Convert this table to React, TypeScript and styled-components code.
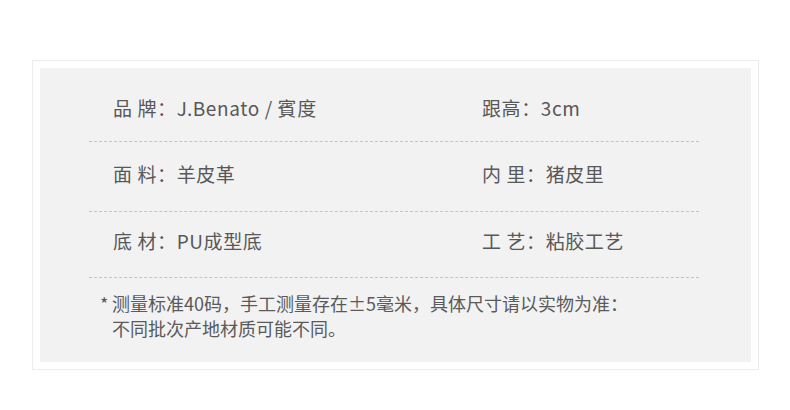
import React from "react";
import styled, { createGlobalStyle } from "styled-components";

const Global = createGlobalStyle`
  html, body { margin: 0; padding: 0; background: #fff; }
  body { font-family: "Noto Sans CJK SC", "Noto Sans", sans-serif; }
`;

const Frame = styled.div`
  margin: 60px 0 0 32px;
  width: 727px;
  height: 310px;
  box-sizing: border-box;
  border: 1px solid #ececec;
  padding: 7px;
`;

const Panel = styled.div`
  background: #f2f2f2;
  height: 100%;
  box-sizing: border-box;
  padding: 0 52px 0 49px;
`;

const Row = styled.div<{ $h: number; $pt: number }>`
  display: grid;
  grid-template-columns: 369px 1fr;
  height: ${(p) => p.$h}px;
  box-sizing: border-box;
  padding: ${(p) => p.$pt}px 0 0 24px;
  align-items: start;
  border-bottom: 1px dashed #c4c4c4;
`;

const Cell = styled.div`
  font-size: 19px;
  line-height: 28px;
  color: #585858;
  white-space: nowrap;
  letter-spacing: 0.6px;
`;

const Note = styled.div`
  padding: 13px 0 0 11px;
  font-size: 18px;
  line-height: 24.5px;
  color: #5a5a5a;
  display: flex;
  gap: 3px;
`;

const Star = styled.span`
  width: 9px;
`;

const rows = [
  { h: 74, pt: 26, a: "品 牌：J.Benato / 賓度", b: "跟高：3cm" },
  { h: 70, pt: 18, a: "面 料：羊皮革", b: "内 里：猪皮里" },
  { h: 66, pt: 15, a: "底 材：PU成型底", b: "工 艺：粘胶工艺" },
];

export default function App() {
  return (
    <>
      <Global />
      <Frame>
        <Panel>
          {rows.map((r) => (
            <Row key={r.a} $h={r.h} $pt={r.pt}>
              <Cell>{r.a}</Cell>
              <Cell>{r.b}</Cell>
            </Row>
          ))}
          <Note>
            <Star>*</Star>
            <div>
              测量标准40码，手工测量存在±5毫米，具体尺寸请以实物为准：
              <br />
              不同批次产地材质可能不同。
            </div>
          </Note>
        </Panel>
      </Frame>
    </>
  );
}
